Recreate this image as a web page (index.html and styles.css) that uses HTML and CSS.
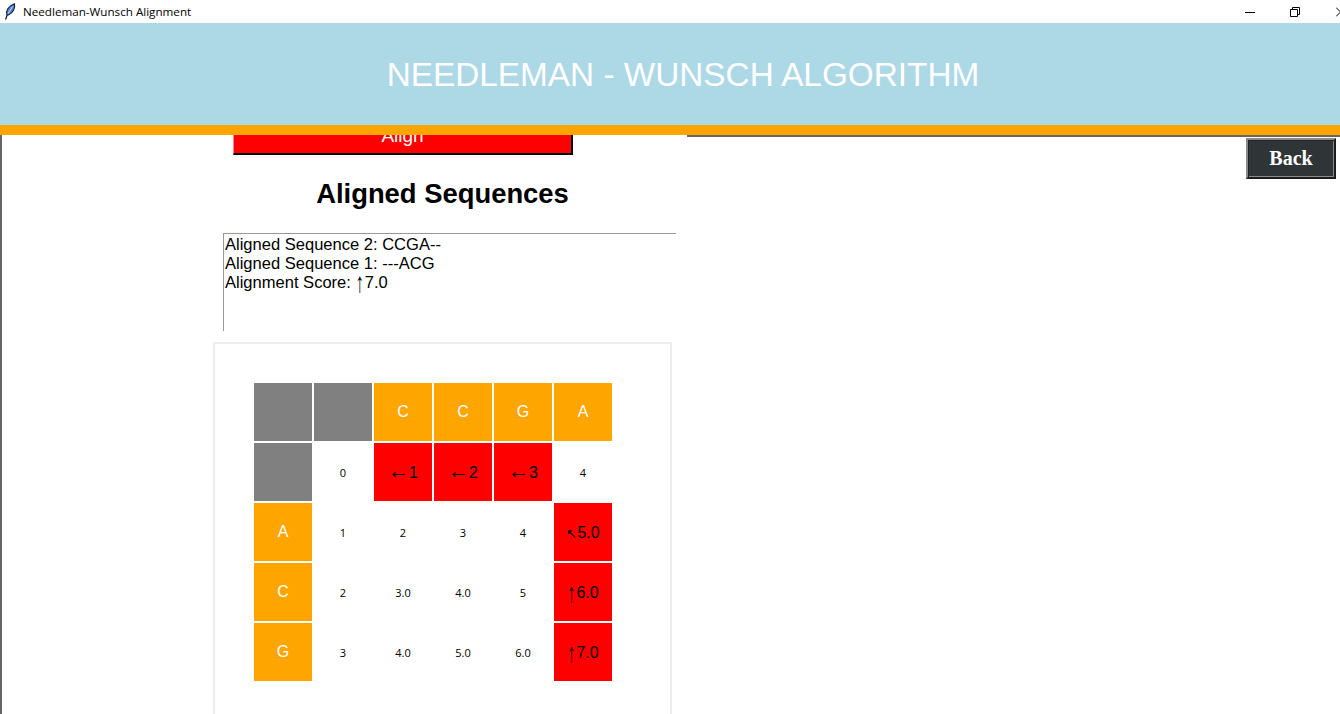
FILE: index.html
```html
<!DOCTYPE html>
<html>
	<head>
		<meta charset="utf-8">
		<title>Needleman-Wunsch Alignment</title>
		<link rel="stylesheet" href="styles.css">
	</head>
	<body>
		<div class="titlebar">
			<svg class="feather" width="12" height="17" viewBox="0 0 12 17">
				<path d="M1.5 16.5 L4 10" stroke="#111" stroke-width="1.2" fill="none"/>
				<path d="M3 12 C1.5 8 4 3 10.5 0.8 C11.5 5 9 10 4.5 12 Z" fill="#4f82cc" stroke="#14203f" stroke-width="1.1"/>
				<path d="M4 10.5 L8.5 3.5" stroke="#cfe0f5" stroke-width="1" fill="none"/>
			</svg>
			<span class="window-title">Needleman-Wunsch Alignment</span>
			<div class="controls">
				<svg class="ctl-min" width="10" height="10" viewBox="0 0 10 10"><path d="M0 5.5H10" stroke="#000" stroke-width="1"/></svg>
				<svg class="ctl-restore" width="10" height="10" viewBox="0 0 10 10"><path d="M2.5 2.5V0.5H9.5V7.5H7.5M0.5 2.5H7.5V9.5H0.5Z" stroke="#000" stroke-width="1" fill="none"/></svg>
				<svg class="ctl-close" width="4" height="10" viewBox="0 0 4 10"><path d="M0 0.5L4.5 5L0 9.5" stroke="#000" stroke-width="1" fill="none"/></svg>
			</div>
		</div>

		<div class="header">
			<h1>NEEDLEMAN - WUNSCH ALGORITHM</h1>
		</div>

		<div class="main">
			<div class="panel">
				<button class="align-btn">Align</button>
				<h2>Aligned Sequences</h2>
				<div class="result">
					<div>Aligned Sequence 2: CCGA--</div>
					<div>Aligned Sequence 1: ---ACG</div>
					<div>Alignment Score: <span class="arrow-up">↑</span>7.0</div>
				</div>
				<div class="card">
					<div class="matrix">
						<div class="cell gray"></div>
						<div class="cell gray"></div>
						<div class="cell base">C</div>
						<div class="cell base">C</div>
						<div class="cell base">G</div>
						<div class="cell base">A</div>

						<div class="cell gray"></div>
						<div class="cell num">0</div>
						<div class="cell path"><span class="arrow-left">←</span>1</div>
						<div class="cell path"><span class="arrow-left">←</span>2</div>
						<div class="cell path"><span class="arrow-left">←</span>3</div>
						<div class="cell num">4</div>

						<div class="cell base">A</div>
						<div class="cell num">1</div>
						<div class="cell num">2</div>
						<div class="cell num">3</div>
						<div class="cell num">4</div>
						<div class="cell path"><span class="arrow-diag">↖</span>5.0</div>

						<div class="cell base">C</div>
						<div class="cell num">2</div>
						<div class="cell num">3.0</div>
						<div class="cell num">4.0</div>
						<div class="cell num">5</div>
						<div class="cell path"><span class="arrow-up">↑</span>6.0</div>

						<div class="cell base">G</div>
						<div class="cell num">3</div>
						<div class="cell num">4.0</div>
						<div class="cell num">5.0</div>
						<div class="cell num">6.0</div>
						<div class="cell path"><span class="arrow-up">↑</span>7.0</div>
					</div>
				</div>
			</div>
			<button class="back-btn">Back</button>
		</div>
	</body>
</html>
```

FILE: styles.css
```css
* {
	margin: 0;
	padding: 0;
	box-sizing: border-box;
}
html, body {
	height: 714px;
	overflow: hidden;
	background: #fff;
}
body {
	display: flex;
	flex-direction: column;
	font-family: "Liberation Sans", Arial, sans-serif;
}

.titlebar {
	height: 23px;
	flex: none;
	display: flex;
	align-items: center;
	padding-left: 4px;
	background: #fff;
}
.feather {
	margin-right: 7px;
	flex: none;
}
.window-title {
	font-family: "Open Sans", "Noto Sans", sans-serif;
	font-size: 11.65px;
	color: #000;
}
.controls {
	margin-left: auto;
	display: flex;
	align-items: center;
}
.ctl-min {
	margin-right: 35px;
}
.ctl-restore {
	margin-right: 36px;
}

.header {
	height: 112px;
	flex: none;
	padding: 2px 0 0 26px;
	background: #add8e6;
	border-bottom: 10px solid orange;
	display: flex;
	align-items: center;
	justify-content: center;
	position: relative;
	z-index: 1;
}
.header h1 {
	font-size: 33.35px;
	font-weight: normal;
	color: #fff;
}

.main {
	flex: 1;
	min-height: 0;
	display: flex;
	align-items: flex-start;
	justify-content: space-between;
	border-top: 2px solid #666;
	border-left: 2px solid #666;
	padding-right: 4px;
}

.panel {
	width: 685px;
	flex: none;
	margin-top: -2px;
	padding: 0 15px 0 211px;
	background: #fff;
}
.align-btn {
	display: block;
	width: 340px;
	height: 40px;
	margin: -20px 0 0 20px;
	padding-top: 3px;
	background: red;
	color: #fff;
	font-family: "Liberation Sans", Arial, sans-serif;
	font-size: 19px;
	border: 1px solid #f88;
	border-right: 2px solid #000;
	border-bottom: 2px solid #000;
}
.panel h2 {
	height: 78px;
	line-height: 78px;
	text-align: center;
	font-size: 27.4px;
	font-weight: bold;
	color: #000;
}
.result {
	width: 453px;
	height: 98px;
	margin-left: 10px;
	padding: 1px 0 0 1px;
	border-top: 1px solid #999;
	border-left: 1px solid #999;
	font-size: 16.55px;
	line-height: 19px;
	color: #000;
}
.arrow-up {
	display: inline-block;
	margin-right: 1px;
	transform: scaleY(1.7);
}
.arrow-left {
	font-size: 21px;
	line-height: 1;
	margin-bottom: 5px;
}
.arrow-diag {
	font-size: 12.5px;
}
.card {
	width: 459px;
	height: 400px;
	margin-top: 11px;
	padding: 39px;
	border: 2px solid #eee;
	background: #fff;
}
.matrix {
	display: grid;
	grid-template-columns: repeat(6, 58px);
	grid-auto-rows: 58px;
	gap: 2px;
}
.cell {
	display: flex;
	align-items: center;
	justify-content: center;
	font-size: 16px;
}
.gray {
	background: gray;
}
.base {
	background: orange;
	color: #fff;
}
.path {
	padding-top: 2px;
	background: red;
	color: #000;
}
.num {
	font-family: "Open Sans", "Noto Sans", sans-serif;
	font-size: 11px;
	color: #000;
}

.back-btn {
	width: 90px;
	height: 41px;
	margin-top: 1px;
	flex: none;
	background: #2f3436;
	color: #fff;
	font-family: "Liberation Serif", "Times New Roman", serif;
	font-size: 20px;
	font-weight: bold;
	border: 2px solid;
	border-color: #8a8a8a #1c1c1c #1c1c1c #8a8a8a;
	box-shadow: inset 1px 1px 0 #222, inset -1px -1px 0 #8a8a8a;
}
```
